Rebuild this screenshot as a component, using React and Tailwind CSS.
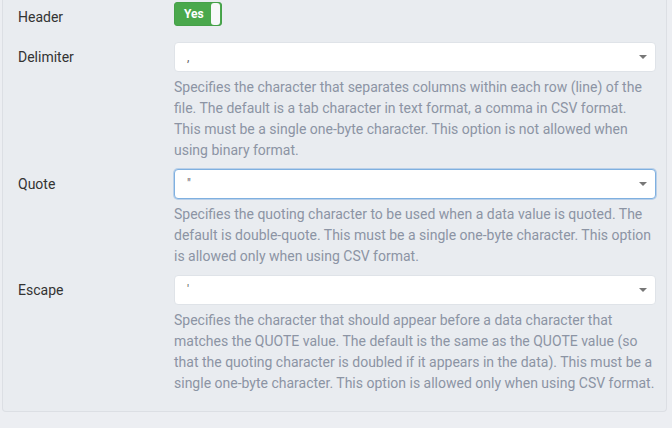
const font = { fontFamily: 'Roboto, "Liberation Sans", sans-serif' };

const Caret = () => (
  <svg width="8" height="4" viewBox="0 0 8 4" className="shrink-0">
    <path d="M0 0 L8 0 L4 4 Z" fill="#777" />
  </svg>
);

const Select = ({ value, focused }) => (
  <div
    className={
      'flex h-[30px] items-center justify-between rounded-[4px] bg-white pl-[12px] pr-[8px] ' +
      (focused
        ? 'border border-[#7fb0e0] shadow-[0_0_0_1px_rgba(128,176,224,0.45)]'
        : 'border border-[#dfe3e8]')
    }
  >
    <span className="text-[12px] leading-none text-[#666]">{value}</span>
    <Caret />
  </div>
);

const Row = ({ label, value, focused, help }) => (
  <div className="flex">
    <div className="w-[156px] shrink-0 pt-[5px] text-[14px] leading-[20px] text-[#333]">
      {label}
    </div>
    <div className="flex-1">
      <Select value={value} focused={focused} />
      <p className="mt-[5px] text-[14px] leading-[21px] text-[#8c94a4]">{help}</p>
    </div>
  </div>
);

export default function App() {
  return (
    <div className="h-[428px] w-[672px] overflow-hidden bg-[#eceef2] pl-[2px] pr-[5px]" style={font}>
      <div className="rounded-b-[4px] border-x border-b border-[#dcdfe4] bg-[#e9ecf0] pb-[17px] pl-[15px] pr-[10px] pt-[2px]">
        <div className="flex">
          <div className="w-[156px] shrink-0 pt-[5px] text-[14px] leading-[20px] text-[#333]">
            Header
          </div>
          <div className="flex h-[24px] w-[48px] items-center justify-between rounded-[3px] border border-[#45a049] bg-[#4aa84c] pl-[9px] pr-[1px]">
            <span className="text-[12px] font-bold text-white">Yes</span>
            <span className="h-[22px] w-[9px] rounded-[3px] bg-[#f7f8fa]"></span>
          </div>
        </div>

        <div className="mt-[15px] flex flex-col gap-[8px]">
          <Row
            label="Delimiter"
            value=","
            help="Specifies the character that separates columns within each row (line) of the file. The default is a tab character in text format, a comma in CSV format. This must be a single one-byte character. This option is not allowed when using binary format."
          />
          <Row
            label="Quote"
            value={'"'}
            focused
            help="Specifies the quoting character to be used when a data value is quoted. The default is double-quote. This must be a single one-byte character. This option is allowed only when using CSV format."
          />
          <Row
            label="Escape"
            value="'"
            help="Specifies the character that should appear before a data character that matches the QUOTE value. The default is the same as the QUOTE value (so that the quoting character is doubled if it appears in the data). This must be a single one-byte character. This option is allowed only when using CSV format."
          />
        </div>
      </div>
    </div>
  );
}
